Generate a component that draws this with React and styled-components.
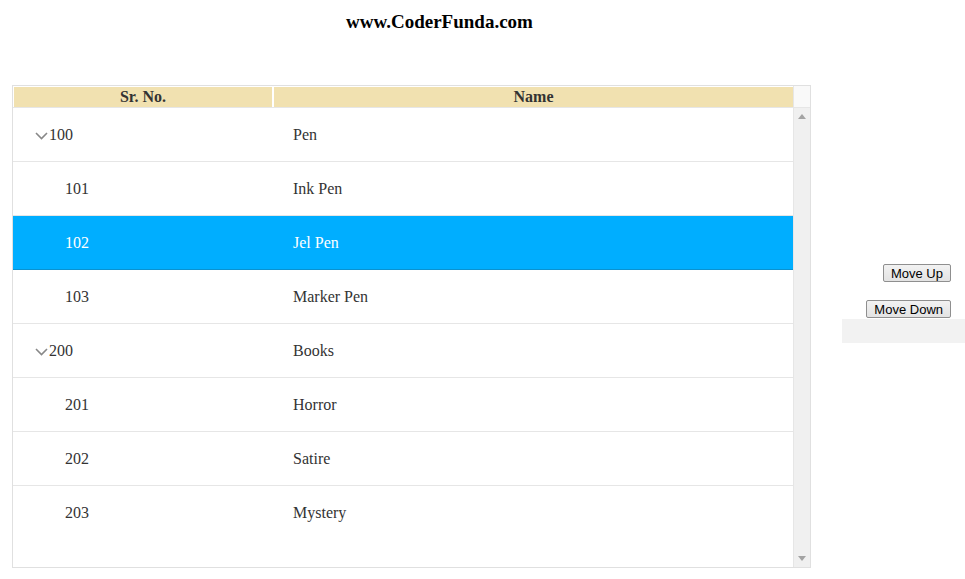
import React from "react";
import styled, { createGlobalStyle } from "styled-components";

const Global = createGlobalStyle`
  html, body { margin: 0; padding: 0; background: #fff; }
  body { font-family: "Liberation Serif", "Times New Roman", serif; }
`;

const Page = styled.div`
  width: 965px;
  height: 579px;
  overflow: hidden;
`;

const Title = styled.h3`
  width: 879px;
  margin: 0;
  padding-top: 11px;
  height: 85px;
  box-sizing: border-box;
  text-align: center;
  font-size: 19px;
  font-weight: bold;
  color: #000;
  line-height: 22px;
`;

const Content = styled.div`
  display: flex;
  align-items: flex-start;
`;

const Grid = styled.div`
  margin-left: 12px;
  width: 799px;
  height: 483px;
  border: 1px solid #e0e0e0;
  box-sizing: border-box;
  display: flex;
  flex-direction: column;
`;

const HeaderRow = styled.div`
  display: flex;
  height: 22px;
  border-bottom: 1px solid #e6e6e6;
  box-sizing: border-box;
  flex: none;
`;

const HeaderCells = styled.div`
  display: flex;
  gap: 2px;
  padding: 1px 0 0 1px;
  width: 780px;
  box-sizing: border-box;
`;

const HeaderCell = styled.div`
  width: ${(p) => p.$w}px;
  flex: ${(p) => (p.$grow ? 1 : "none")};
  background: #f1e1b0;
  text-align: center;
  font-size: 16px;
  font-weight: bold;
  color: #333;
  line-height: 20px;
`;

const HeaderScroll = styled.div`
  width: 17px;
  flex: none;
  border-left: 1px solid #e6e6e6;
  background: #f9f9f9;
  box-sizing: border-box;
`;

const Body = styled.div`
  flex: 1;
  display: flex;
  min-height: 0;
`;

const Rows = styled.div`
  width: 780px;
  flex: none;
`;

const Row = styled.div`
  display: flex;
  height: 54px;
  box-sizing: border-box;
  border-bottom: 1px solid ${(p) => (p.$selected ? "#0a92d0" : "#e6e6e6")};
  background: ${(p) => (p.$selected ? "#00aeff" : "#fff")};
  color: ${(p) => (p.$selected ? "#fff" : "#333")};
  font-size: 16px;
  align-items: center;
  &:last-child { border-bottom: none; }
`;

const IdCell = styled.div`
  width: 260px;
  flex: none;
  display: flex;
  align-items: center;
  padding-left: 22px;
  box-sizing: border-box;
`;

const Toggle = styled.span`
  width: ${(p) => (p.$child ? 30 : 14)}px;
  flex: none;
  display: inline-flex;
  align-items: center;
  padding-top: 2px;
`;

const NameCell = styled.div`
  flex: 1;
  padding-left: 20px;
`;

const Scrollbar = styled.div`
  width: 17px;
  flex: none;
  border-left: 1px solid #e6e6e6;
  background: #f0f0f0;
  box-sizing: border-box;
  display: flex;
  flex-direction: column;
  justify-content: space-between;
  align-items: center;
  padding: 6px 0 6px 0;
`;

const Side = styled.div`
  margin-left: 31px;
  width: 123px;
  display: flex;
  flex-direction: column;
  align-items: flex-end;
  padding-top: 179px;
`;

const Button = styled.button`
  font-family: "Liberation Sans", Arial, sans-serif;
  font-size: 13px;
  line-height: 15px;
  color: #000;
  padding: 0 7px;
  height: 18px;
  border: 1px solid #8f8f8f;
  border-radius: 2px;
  background: linear-gradient(#f2f2f2, #e3e3e3);
  margin-right: 14px;
  margin-bottom: ${(p) => p.$mb || 0}px;
  cursor: pointer;
`;

const GreyBox = styled.div`
  width: 123px;
  height: 24px;
  background: #f2f2f2;
  margin-top: 1px;
`;

const Chevron = () => (
  <svg width="13" height="8" viewBox="0 0 13 8">
    <polyline points="1,1 6.5,6.5 12,1" fill="none" stroke="#888" strokeWidth="1.6" />
  </svg>
);

const Arrow = ({ up }) => (
  <svg width="8" height="5" viewBox="0 0 8 5">
    <polygon points={up ? "0,5 4,0 8,5" : "0,0 8,0 4,5"} fill="#a3a3a3" />
  </svg>
);

const data = [
  { id: "100", name: "Pen", parent: true },
  { id: "101", name: "Ink Pen" },
  { id: "102", name: "Jel Pen", selected: true },
  { id: "103", name: "Marker Pen" },
  { id: "200", name: "Books", parent: true },
  { id: "201", name: "Horror" },
  { id: "202", name: "Satire" },
  { id: "203", name: "Mystery" },
];

export default function App() {
  return (
    <Page>
      <Global />
      <Title>www.CoderFunda.com</Title>
      <Content>
        <Grid>
          <HeaderRow>
            <HeaderCells>
              <HeaderCell $w={258}>Sr. No.</HeaderCell>
              <HeaderCell $grow>Name</HeaderCell>
            </HeaderCells>
            <HeaderScroll />
          </HeaderRow>
          <Body>
            <Rows>
              {data.map((r) => (
                <Row key={r.id} $selected={r.selected}>
                  <IdCell>
                    <Toggle $child={!r.parent}>{r.parent && <Chevron />}</Toggle>
                    {r.id}
                  </IdCell>
                  <NameCell>{r.name}</NameCell>
                </Row>
              ))}
            </Rows>
            <Scrollbar>
              <Arrow up />
              <Arrow />
            </Scrollbar>
          </Body>
        </Grid>
        <Side>
          <Button $mb={18}>Move Up</Button>
          <Button>Move Down</Button>
          <GreyBox />
        </Side>
      </Content>
    </Page>
  );
}
